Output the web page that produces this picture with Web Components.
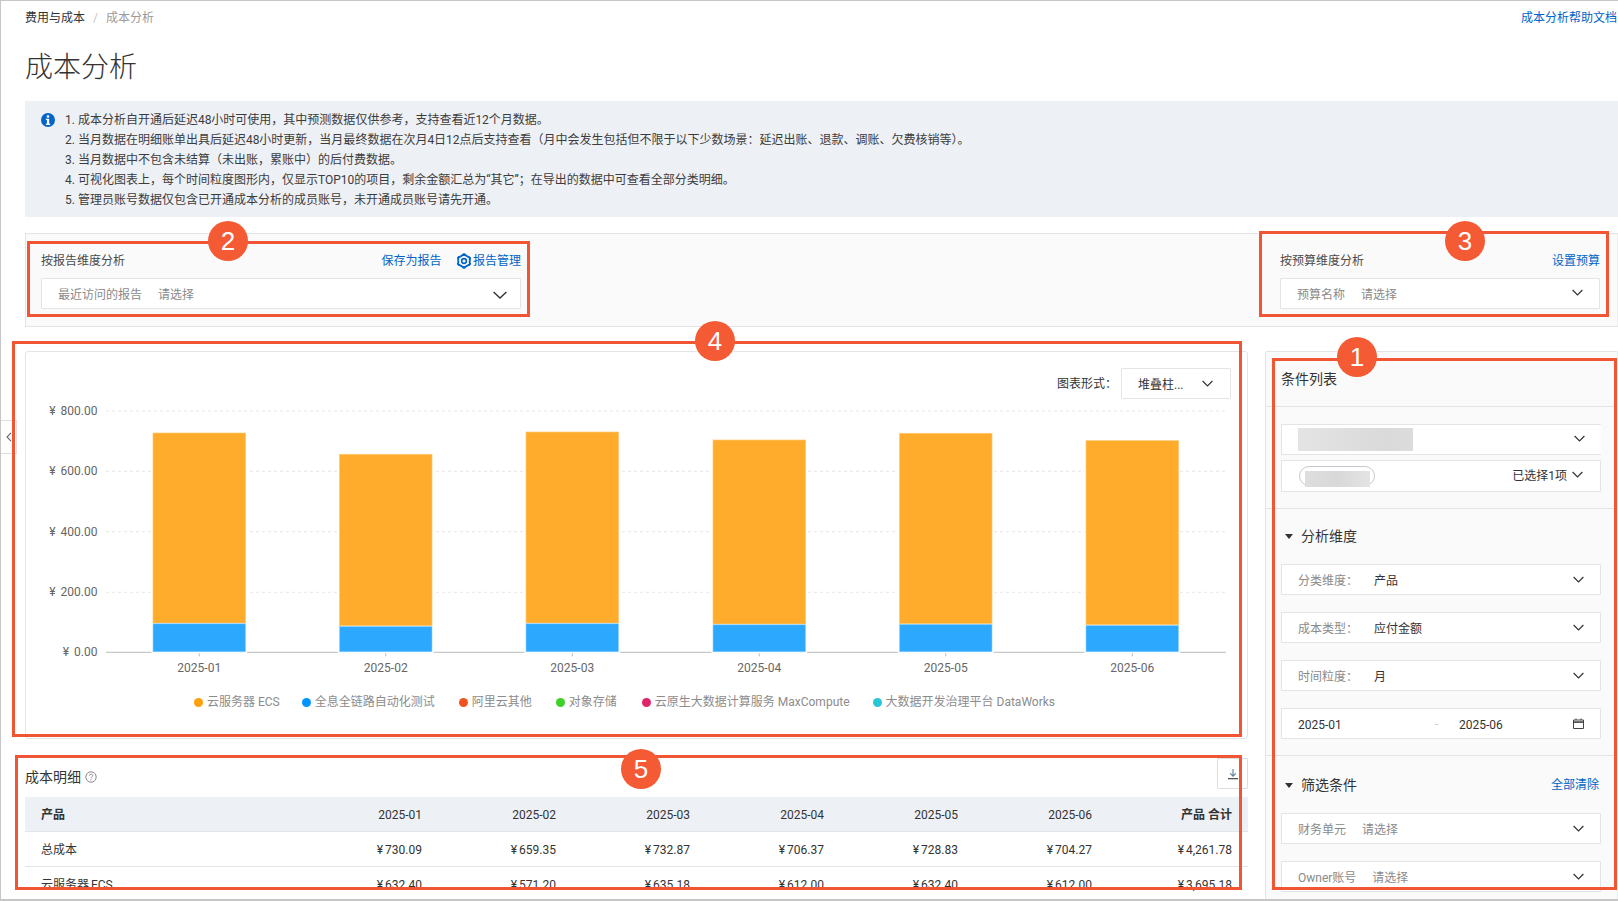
<!DOCTYPE html>
<html lang="zh"><head><meta charset="utf-8"><title>成本分析</title>
<style>
html,body{margin:0;padding:0;background:#fff;overflow:hidden}
body{font:12px/20px Roboto,"Noto Sans CJK SC",sans-serif;color:#333}
</style></head><body>
<app-shell>
  <page-header></page-header>
  <info-alert>
    <div>1. 成本分析自开通后延迟48小时可使用&#xFF0C;其中预测数据仅供参考&#xFF0C;支持查看近12个月数据。</div>
    <div>2. 当月数据在明细账单出具后延迟48小时更新&#xFF0C;当月最终数据在次月4日12点后支持查看&#xFF08;月中会发生包括但不限于以下少数场景&#xFF1A;延迟出账、退款、调账、欠费核销等&#xFF09;。</div>
    <div>3. 当月数据中不包含未结算&#xFF08;未出账&#xFF0C;累账中&#xFF09;的后付费数据。</div>
    <div>4. 可视化图表上&#xFF0C;每个时间粒度图形内&#xFF0C;仅显示TOP10的项目&#xFF0C;剩余金额汇总为“其它”&#xFF1B;在导出的数据中可查看全部分类明细。</div>
    <div>5. 管理员账号数据仅包含已开通成本分析的成员账号&#xFF0C;未开通成员账号请先开通。</div>
  </info-alert>
  <report-panel></report-panel>
  <main-area>
    <div slot="left">
      <chart-card></chart-card>
      <detail-table></detail-table>
    </div>
    <condition-panel slot="side"></condition-panel>
  </main-area>

  <side-toggle></side-toggle>
  <anno-box style="left:1272px;top:358px;width:345px;height:532px"></anno-box>
  <anno-box style="left:27px;top:241px;width:503px;height:76px"></anno-box>
  <anno-box style="left:1259px;top:231px;width:350px;height:86px"></anno-box>
  <anno-box style="left:12px;top:341px;width:1230px;height:396px"></anno-box>
  <anno-box style="left:15px;top:755px;width:1227px;height:135px"></anno-box>
  <anno-badge style="left:1337px;top:337px">1</anno-badge>
  <anno-badge style="left:208px;top:221px">2</anno-badge>
  <anno-badge style="left:1445px;top:221px">3</anno-badge>
  <anno-badge style="left:695px;top:321px">4</anno-badge>
  <anno-badge style="left:621px;top:749px">5</anno-badge>
</app-shell>
<script>
const FONT='Roboto,"Noto Sans CJK SC",sans-serif';
const chev=(w=11,h=6,c='#333',sw=1.2)=>`<svg width="${w}" height="${h+2}" viewBox="0 0 ${w} ${h+2}" style="display:block" fill="none"><path d="M.6 1 L${w/2} ${h} L${w-.6} 1" stroke="${c}" stroke-width="${sw}"/></svg>`;
function def(name,css,html,init){
  customElements.define(name,class extends HTMLElement{
    connectedCallback(){
      if(this.shadowRoot)return;
      const r=this.attachShadow({mode:'open'});
      r.innerHTML=`<style>${css}</style>`+(typeof html==='function'?html(this):html);
      if(init)init(r,this);
    }
  });
}
def('app-shell',`:host{display:block;position:relative;width:1618px;height:901px;box-sizing:border-box;overflow:hidden;
  border-top:1px solid #c6c6c6;border-left:1px solid #c6c6c6;border-bottom:2px solid #c6c6c6;background:#fff;font:12px/20px ${FONT};color:#333}`,`<slot></slot>`);

def('page-header',`:host{display:block;padding:7px 0 0 24px}
 .top{display:flex;justify-content:space-between;height:20px;line-height:20px}
 .crumb b{font-weight:400;color:#333}.crumb i{font-style:normal;color:#c8c8c8;margin:0 8px}.crumb span{color:#9a9a9a}
 a{color:#0064c8;text-decoration:none;white-space:nowrap;margin-right:1px}
 h1{margin:20px 0 0;font-size:28px;line-height:40px;font-weight:300;color:#333}`,
 `<div class="top"><div class="crumb"><b>费用与成本</b><i>/</i><span>成本分析</span></div><a>成本分析帮助文档</a></div><h1>成本分析</h1>`);

def('info-alert',`:host{display:flex;margin:13px 0 0 24px;background:#edf0f5;padding:9px 0 7px 16px;line-height:20px;color:#3c3c3c}
 svg{flex:none;margin:3px 10px 0 0}`,
 `<svg width="14" height="14" viewBox="0 0 14 14"><circle cx="7" cy="7" r="7" fill="#0064c8"/><rect x="5.800" y="2.300" width="2.400" height="2.300" fill="#fff"/><path d="M4.900 5.700h3.300v5.100h1V12H4.900v-1.200h1V6.900h-1z" fill="#fff"/></svg><div><slot></slot></div>`);

def('ui-select',`:host{display:flex;align-items:center;box-sizing:border-box;height:31px;background:#fff;border:1px solid #e3e4e6;border-radius:1px;padding:0 16px;color:#333;position:relative}
 .l{color:#8a8a8a;flex:none;padding-top:2px}.v{flex:1;min-width:0;white-space:nowrap;padding-top:2px}.p{color:#8a8a8a}
 .n{padding-top:0}
 .c{position:absolute;display:block}`,
 h=>{const lw=h.getAttribute('lw');const lab=h.getAttribute('label');
  const v=h.getAttribute('value'),p=h.getAttribute('placeholder');
  const big=h.hasAttribute('big');
  return (lab?`<span class="l" style="${lw?`width:${lw}px`:'margin-right:16px'}">${lab}</span>`:'')+
   `<span class="v ${v?'':'p'} ${(v||p)?'':'n'}">${v||p||''}<slot></slot></span>`+
   `<span class="c" style="right:${big?13:16}px;top:${big?12:h.getAttribute('ct')||10}px">${big?chev(14,7,'#333',1.4):chev(11,6)}</span>`;});

def('report-panel',`:host{display:flex;justify-content:space-between;box-sizing:border-box;height:94px;margin:16px 0 0 24px;background:#fafafa;border:1px solid #e3e4e6;border-right-color:#eee;padding:17px 17px 0 15px}
 .b{display:block}.row{display:flex;justify-content:space-between;align-items:center;height:20px;margin-bottom:7px;color:#4a4a4a}
 a{color:#0064c8;display:inline-flex;align-items:center}
 .a2{margin-left:15px}`,
 `<div class="b" style="width:480px"><div class="row"><span>按报告维度分析</span><span style="display:flex"><a>保存为报告</a><a class="a2"><svg width="16" height="16" viewBox="0 0 15 15" fill="none" stroke="#0064c8" style="margin-right:.5px"><path d="M7.500 1.300 12.900 4.400v6.200L7.500 13.700 2.100 10.600V4.400z" stroke-width="1.700" stroke-linejoin="round"/><circle cx="7.500" cy="7.500" r="6.300" stroke-width="1.500" stroke-dasharray="2.600 4" stroke-dashoffset="-2"/><circle cx="7.500" cy="7.500" r="2.200" stroke-width="1.500"/></svg>报告管理</a></span></div>
   <ui-select big label="最近访问的报告" placeholder="请选择"></ui-select></div>
  <div class="b" style="width:320px"><div class="row"><span>按预算维度分析</span><a>设置预算</a></div>
   <ui-select label="预算名称" placeholder="请选择"></ui-select></div>`);

def('main-area',`:host{display:flex;margin-left:24px;gap:17px;align-items:flex-start}
 .l{width:1223px;flex:none;padding-top:24px}.s{flex:1;padding-top:24px}`,
 `<div class="l"><slot name="left"></slot></div><div class="s"><slot name="side"></slot></div>`);

def('chart-card',`:host{display:block;box-sizing:border-box;height:388px;border:1px solid #e3e4e6;border-radius:3px;background:#fff}
 .tb{display:flex;justify-content:flex-end;align-items:center;margin:16px 16px 1px 0;height:31px}
 .tb span.t{margin-right:4px;color:#333}
 .sel{box-sizing:border-box;width:110px;height:31px;border:1px solid #e3e4e6;border-radius:1px;display:flex;align-items:center;justify-content:space-between;padding:0 17px 0 16px}
 .sel span{padding-top:2px}
 svg.plot{display:block}
 .lg{display:flex;gap:23px;padding-left:168px;margin-top:5px;color:#8c8c8c;line-height:20px;white-space:nowrap}
 .lg div{display:flex;align-items:center;gap:4px}.lg i{width:9px;height:9px;border-radius:50%;display:block;margin-top:1px}`,
 ()=>{
  const W=1221,H=287,ox=26,oy=400;
  const gridY=[411,471.3,531.7,592.3];const axisY=652.3;
  const labels=['¥ 800.00','¥ 600.00','¥ 400.00','¥ 200.00'];
  let s=`<svg class="plot" width="${W}" height="${H}" viewBox="0 0 ${W} ${H}" font-family='${FONT}' font-size="12" fill="#666" word-spacing="2">`;
  gridY.forEach((y,i)=>{
    s+=`<line x1="80" x2="1200" y1="${y-oy}" y2="${y-oy}" stroke="#e6e6e6" stroke-dasharray="3 3"/>`;
    s+=`<text x="${97.5-ox}" y="${y-oy+4}" text-anchor="end">${labels[i]}</text>`;
  });
  s+=`<text x="${97.5-ox}" y="${axisY-oy+4}" text-anchor="end">¥ 0.00</text>`;
  s+=`<line x1="80" x2="1200" y1="${axisY-oy}" y2="${axisY-oy}" stroke="#bbb"/>`;
  const bars=[[153,433,623,'2025-01'],[339.5,454.3,625.7,'2025-02'],[526,432,623,'2025-03'],[713,440,624,'2025-04'],[899.5,433.3,623.6,'2025-05'],[1086,440.7,624.7,'2025-06']];
  bars.forEach(([x,t,m,l])=>{
    const bx=x-ox,w=92.5,cx=bx+w/2;
    s+=`<rect x="${bx-1.5}" y="${t-oy-1.5}" width="${w+3}" height="${axisY-t+2.500}" fill="#fff"/>`;
    s+=`<rect x="${bx}" y="${t-oy}" width="${w}" height="${m-t}" fill="#ffab2b" stroke="#ffc870" stroke-width=".7"/>`;
    s+=`<rect x="${bx}" y="${m-oy+.8}" width="${w}" height="${651.8-m-.8}" fill="#2ca9ff" stroke="#8fd0ff" stroke-width=".6"/>`;
    s+=`<line x1="${cx}" x2="${cx}" y1="${axisY-oy+1}" y2="${axisY-oy+4}" stroke="#bbb"/>`;
    s+=`<text x="${cx}" y="${672-oy}" text-anchor="middle">${l}</text>`;
  });
  s+='</svg>';
  const lg=[['#ff9f0a','云服务器 ECS',0],['#0095ff','全息全链路自动化测试',-1],['#f0541e','阿里云其他',1],['#3fd02a','对象存储',1],['#e0246a','云原生大数据计算服务 MaxCompute',2],['#29c5d8','大数据开发治理平台 DataWorks',0]];
  return `<div class="tb"><span class="t">图表形式&#xFF1A;</span><div class="sel"><span>堆叠柱...</span>${chev(11,6)}</div></div>`+s+
   `<div class="lg">${lg.map(([c,t,m])=>`<div style="margin-left:${m}px"><i style="background:${c}"></i><span>${t}</span></div>`).join('')}</div>`;
 });

def('detail-table',`:host{display:block;margin-top:19px}
 .h{display:flex;justify-content:space-between;align-items:flex-start;height:31px;margin-bottom:8px}
 .t{display:flex;align-items:center;gap:4px;font-size:14px;line-height:20px;margin-top:9px;color:#333}
 .dl{width:31px;height:31px;box-sizing:border-box;border:1px solid #dcdee0;border-radius:1px;display:flex;align-items:center;justify-content:center;background:#fff}
 .r{display:grid;grid-template-columns:280.500px 132.500px repeat(5,134px) 140px;height:35px;border-bottom:1px solid #e3e4e6;box-sizing:border-box;align-items:center;color:#333;white-space:nowrap;padding-top:2px;word-spacing:-1px}
 .r>*{text-align:right;padding-right:16px}.r>*:first-child{text-align:left;padding:0 0 0 16px}
 .hd{background:#edf0f5;font-weight:400;word-spacing:0}
 .hd b{font-weight:700}`,
 ()=>{
  const row=(a,c)=>`<div class="r ${c||''}">${a.map((x,i)=>`<span>${x}</span>`).join('')}</div>`;
  return `<div class="h"><div class="t">成本明细<svg width="12" height="12" viewBox="0 0 12 12" fill="none" stroke="#8a8a8a"><circle cx="6" cy="6" r="5.200"/><path d="M4.400 4.700c0-2.100 3.300-2.100 3.300-.1 0 1.300-1.700 1.400-1.700 2.700"/><path d="M6 8.300v1.100"/></svg></div>
   <div class="dl"><svg width="12" height="12" viewBox="0 0 12 12" fill="none" stroke-width="1.100"><path d="M6 1v7M3.200 5.400 6 8.200l2.800-2.800" stroke="#5a7fa5"/><path d="M1 10.700h10" stroke="#333"/></svg></div></div>`+
   `<div class="r hd"><span><b>产品</b></span><span>2025-01</span><span>2025-02</span><span>2025-03</span><span>2025-04</span><span>2025-05</span><span>2025-06</span><span><b>产品 合计</b></span></div>`+
   row(['总成本','¥ 730.09','¥ 659.35','¥ 732.87','¥ 706.37','¥ 728.83','¥ 704.27','¥ 4,261.78'])+
   row(['云服务器 ECS','¥ 632.40','¥ 571.20','¥ 635.18','¥ 612.00','¥ 632.40','¥ 612.00','¥ 3,695.18']);
 });

def('condition-panel',`:host{display:block;box-sizing:border-box;height:560px;background:#fafafa;border:1px solid #e3e4e6;border-right:1px solid #eee;border-radius:2px 0 0 0}
 .head{height:54px;line-height:54px;font-size:14px;padding-left:15px;border-bottom:1px solid #e3e4e6;color:#333;box-sizing:content-box}
 .sec{padding:17px 15px 16px;border-bottom:1px solid #e3e4e6;display:flex;flex-direction:column;gap:17px}
 .sec.last{border:0;padding-top:19px}
 .sec.first{gap:5px}
 .st{display:flex;align-items:center;height:20px;font-size:14px;margin-bottom:1px;color:#333;justify-content:space-between}
 .st span{display:flex;align-items:center}
 .tri{width:0;height:0;border:4px solid transparent;border-top:5px solid #333;border-bottom:0;margin:1px 8px 0 4px}
 .st a{font-size:12px;color:#0064c8;margin-right:3px}
 ui-select{width:320px}
 .blur{display:block;width:115px;height:23px;background:linear-gradient(90deg,#e4e4e4,#dadada 75%,#dcdcdc)}
 .pill{display:flex;position:relative;width:76px;height:20px;box-sizing:border-box;border:1px solid #c4c9cf;border-radius:10px;background:#fff}
 .pill i{position:absolute;left:5px;top:4px;width:65px;height:16px;background:linear-gradient(90deg,#dedede,#d8d8d8 50%,#e4e4e4)}
 .two{display:flex;align-items:center;justify-content:space-between;box-sizing:border-box;width:320px;height:32px;background:#fff;border:1px solid #e3e4e6;border-radius:1px;padding:0 17px 0 17px}
 .two span{display:flex;align-items:center;gap:5px;color:#333}
 .two svg{margin-top:-3px}
 .date{display:flex;align-items:center;box-sizing:border-box;width:320px;height:31px;background:#fff;border:1px solid #e3e4e6;border-radius:1px;padding:0 16px;color:#333}
 .date span,.date em{padding-top:2px}
 .date span{width:137px}.date i{font-style:normal;color:#ccc;width:24px}.date em{flex:1;font-style:normal}`,
 `<div class="head">条件列表</div>
 <div class="sec first">
  <ui-select style="border-right:0"><span class="blur"></span></ui-select>
  <div class="two"><div class="pill"><i></i></div><span>已选择1项${chev(11,6)}</span></div>
 </div>
 <div class="sec">
  <div class="st"><span><i class="tri"></i>分析维度</span></div>
  <ui-select label="分类维度&#xFF1A;" lw="76" value="产品" ct="11"></ui-select>
  <ui-select label="成本类型&#xFF1A;" lw="76" value="应付金额" ct="11"></ui-select>
  <ui-select label="时间粒度&#xFF1A;" lw="76" value="月" ct="11"></ui-select>
  <div class="date"><span>2025-01</span><i>-</i><em>2025-06</em><svg width="11" height="11" viewBox="0 0 11 11" fill="none" stroke="#444" style="margin:-1px 0 0"><path d="M.5 2h10v8.500H.5z"/><path d="M1 3.200h9v1.800H1z" fill="#555" stroke="none"/><path d="M3 .5V2M8 .5V2"/></svg></div>
 </div>
 <div class="sec last">
  <div class="st"><span><i class="tri"></i>筛选条件</span><a>全部清除</a></div>
  <ui-select label="财务单元" placeholder="请选择" ct="11"></ui-select>
  <ui-select label="Owner账号" placeholder="请选择" ct="11"></ui-select>
 </div>`);

def('side-toggle',`:host{position:absolute;left:0;top:419px;width:16px;height:34px;box-sizing:border-box;background:#fff;border:1px solid #dcdee0;border-left:0;display:flex;align-items:center;justify-content:center}`,
 `<svg width="6" height="10" viewBox="0 0 6 10" fill="none" stroke="#666" stroke-width="1.100"><path d="M5 .8 1 5l4 4.200"/></svg>`);
def('anno-box',`:host{position:absolute;box-sizing:border-box;border:3px solid #f25533;pointer-events:none;margin:-1px 0 0 -1px}`,``);
def('anno-badge',`:host{position:absolute;width:40px;height:40px;border-radius:50%;background:#f45a33;color:#fff;font:26px/40px "Liberation Sans",sans-serif;text-align:center;margin:-1px 0 0 -1px}`,`<slot></slot>`);
</script>
</body></html>
